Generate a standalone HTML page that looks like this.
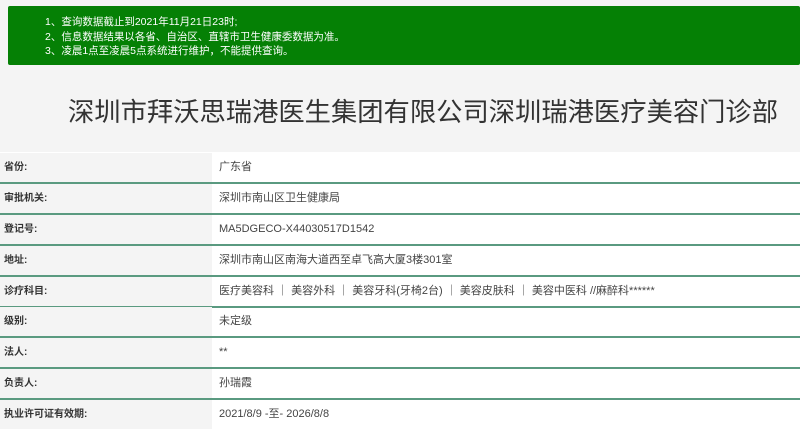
<!DOCTYPE html>
<html><head><meta charset="utf-8"><style>
*{margin:0;padding:0;box-sizing:border-box}
body{width:800px;height:427px;overflow:hidden;background:#fff;font-family:"Liberation Sans","Noto Sans CJK SC",sans-serif;color:#333;position:relative}
.top{position:absolute;left:0;top:0;width:800px;height:152px;background:#f4f4f4}
.green{position:absolute;left:8px;top:6px;width:792px;height:59px;background:#058005;border-radius:2px;color:#fff;font-size:10.5px;line-height:14.5px;padding:9px 0 0 37px}
.title{position:absolute;left:68px;top:93px;font-size:26.3px;color:#333;white-space:nowrap;line-height:38px}
.row{position:absolute;left:0;width:800px;height:31px;border-bottom:2px solid #5a9a80}
.l{position:absolute;left:0;top:0;width:212px;height:29px;background:#f4f4f4;font-size:10px;font-weight:bold;color:#333;padding-left:4px;line-height:29px}
.v{position:absolute;left:219px;top:0;font-size:11px;line-height:29px;color:#444;white-space:nowrap}
</style></head><body>
<div class="top"></div>
<div class="green">1、查询数据截止到2021年11月21日23时;<br>2、信息数据结果以各省、自治区、直辖市卫生健康委数据为准。<br>3、凌晨1点至凌晨5点系统进行维护，不能提供查询。</div>
<div class="title">深圳市拜沃思瑞港医生集团有限公司深圳瑞港医疗美容门诊部</div>
<div class="row" style="top:153px"><div class="l">省份:</div><div class="v">广东省</div></div>
<div class="row" style="top:184px"><div class="l">审批机关:</div><div class="v">深圳市南山区卫生健康局</div></div>
<div class="row" style="top:215px"><div class="l">登记号:</div><div class="v">MA5DGECO-X44030517D1542</div></div>
<div class="row" style="top:246px"><div class="l">地址:</div><div class="v">深圳市南山区南海大道西至卓飞高大厦3楼301室</div></div>
<div class="row" style="top:277px"><div class="l">诊疗科目:</div><div class="v">医疗美容科 ｜ 美容外科 ｜ 美容牙科(牙椅2台) ｜ 美容皮肤科 ｜ 美容中医科 //麻醉科******</div></div>
<div class="row" style="top:307px"><div class="l">级别:</div><div class="v">未定级</div></div>
<div class="row" style="top:338px"><div class="l">法人:</div><div class="v">**</div></div>
<div class="row" style="top:369px"><div class="l">负责人:</div><div class="v">孙瑞霞</div></div>
<div class="row" style="top:400px;border-bottom:none"><div class="l">执业许可证有效期:</div><div class="v">2021/8/9 -至- 2026/8/8</div></div>
</body></html>
